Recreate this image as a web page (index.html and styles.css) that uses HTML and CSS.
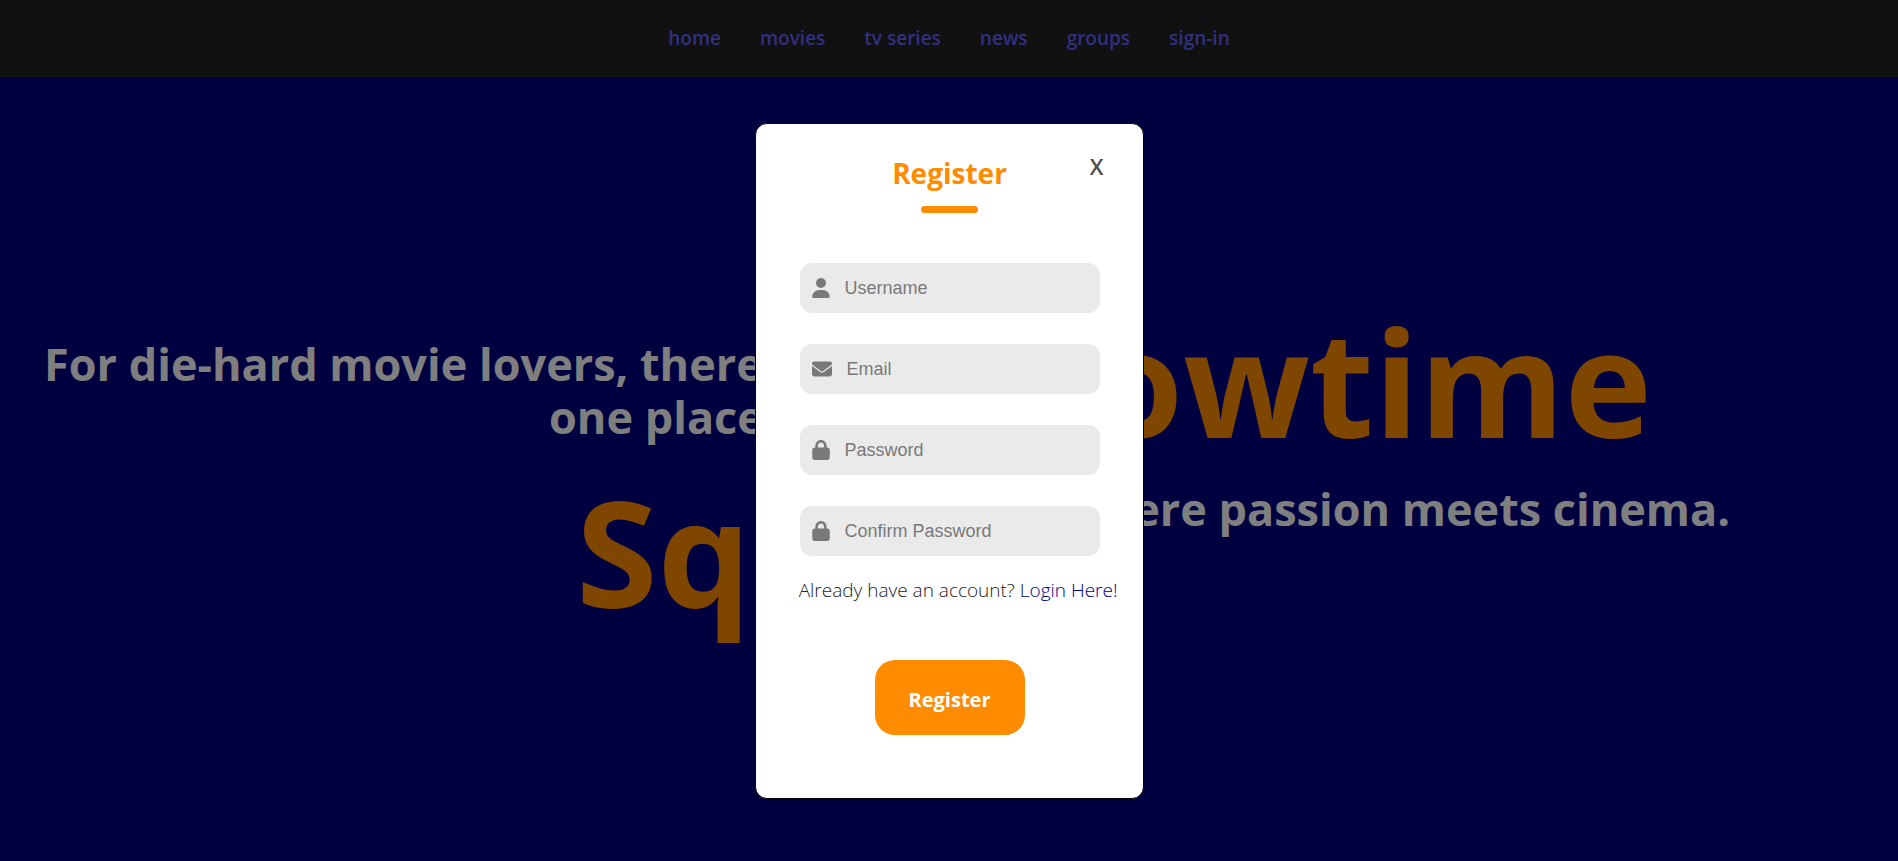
FILE: index.html
```html
<!DOCTYPE html>
<html lang="en">
<head>
<meta charset="utf-8">
<title>Showtime Squad</title>
<link rel="stylesheet" href="styles.css">
</head>
<body>
<header class="topbar">
  <nav class="nav">
    <a href="#">home</a>
    <a href="#">movies</a>
    <a href="#">tv series</a>
    <a href="#">news</a>
    <a href="#">groups</a>
    <a href="#">sign-in</a>
  </nav>
</header>
<main class="hero">
  <section class="hero-left">
    <p class="lead">For die-hard movie lovers, there</p>
    <p class="lead lead-second">one place</p>
    <p class="brand brand-second">Squad</p>
  </section>
  <section class="hero-right">
    <p class="brand">Showtime</p>
    <p class="lead tagline">where passion meets cinema.</p>
  </section>
</main>
<div class="backdrop">
  <form class="modal" role="dialog" aria-labelledby="title">
    <div class="modal-head">
      <h1 class="title" id="title">Register</h1>
      <button class="close" type="button">X</button>
    </div>
    <div class="fields">
      <label class="field">
        <svg class="icon icon-narrow" viewBox="0 0 448 512"><path d="M224 256A128 128 0 1 0 224 0a128 128 0 1 0 0 256zm-45.700 48C79.800 304 0 383.800 0 482.300 0 498.700 13.300 512 29.700 512h388.600c16.400 0 29.700-13.300 29.700-29.700C448 383.800 368.200 304 269.700 304h-91.400z"/></svg>
        <input type="text" placeholder="Username" aria-label="Username">
      </label>
      <label class="field">
        <svg class="icon icon-wide" viewBox="0 0 512 512"><path d="M48 64C21.500 64 0 85.500 0 112c0 15.100 7.100 29.300 19.200 38.400l217.600 163.200c11.400 8.500 27 8.500 38.400 0l217.600-163.200c12.100-9.100 19.200-23.300 19.200-38.400 0-26.500-21.500-48-48-48H48zM0 176v208c0 35.300 28.700 64 64 64h384c35.300 0 64-28.700 64-64V176L294.400 339.200c-22.800 17.100-54 17.100-76.800 0L0 176z"/></svg>
        <input type="email" placeholder="Email" aria-label="Email">
      </label>
      <label class="field">
        <svg class="icon icon-narrow" viewBox="0 0 448 512"><path d="M144 144v48h160v-48c0-44.200-35.800-80-80-80s-80 35.800-80 80zm-64 48v-48C80 64.500 144.500 0 224 0s144 64.500 144 144v48h16c35.300 0 64 28.700 64 64v192c0 35.300-28.700 64-64 64H64c-35.300 0-64-28.700-64-64V256c0-35.300 28.700-64 64-64h16z"/></svg>
        <input type="password" placeholder="Password" aria-label="Password">
      </label>
      <label class="field">
        <svg class="icon icon-narrow" viewBox="0 0 448 512"><path d="M144 144v48h160v-48c0-44.200-35.800-80-80-80s-80 35.800-80 80zm-64 48v-48C80 64.500 144.500 0 224 0s144 64.500 144 144v48h16c35.300 0 64 28.700 64 64v192c0 35.300-28.700 64-64 64H64c-35.300 0-64-28.700-64-64V256c0-35.300 28.700-64 64-64h16z"/></svg>
        <input type="password" placeholder="Confirm Password" aria-label="Confirm Password">
      </label>
    </div>
    <p class="login">Already have an account? <a href="#">Login Here!</a></p>
    <button class="submit" type="submit">Register</button>
  </form>
</div>
</body>
</html>
```
FILE: styles.css
```css
* { box-sizing: border-box; }
body {
  margin: 0;
  min-height: 100vh;
  background: #000080;
  font-family: "Segoe UI", "Open Sans", "Noto Sans", sans-serif;
}
p, h1 { margin: 0; }
a { text-decoration: none; }

.topbar {
  display: flex;
  justify-content: center;
  background: #222;
}
.nav {
  display: flex;
  gap: 39px;
  padding: 24px;
  font-size: 19px;
  line-height: 29px;
  font-weight: 600;
}
.nav a { color: #6060ff; }

.hero {
  display: grid;
  grid-template-columns: minmax(0, 1fr) minmax(0, 1fr);
  white-space: nowrap;
}
.hero-left { padding: 260px 0 0 44px; }
.hero-right {
  padding: 220px 168px 0 0;
  display: flex;
  flex-direction: column;
  align-items: flex-end;
}
.lead {
  color: #fff;
  font-size: 45px;
  line-height: 53px;
  font-weight: 700;
}
.lead-second { margin-left: 505px; }
.brand {
  color: #ff8c00;
  font-size: 148px;
  line-height: 168px;
  font-weight: 700;
}
.brand-second { margin: 24px 0 0 532px; }
.hero-right .brand { margin-right: 78px; }
.tagline { margin-top: 17px; }

.backdrop {
  position: fixed;
  inset: 0;
  display: flex;
  align-items: center;
  justify-content: center;
  padding-top: 60px;
  background: rgba(0, 0, 0, 0.5);
}
.modal {
  display: flex;
  flex-direction: column;
  align-items: center;
  width: 389px;
  padding: 28px 25px 63px 26px;
  border: 1px solid #000;
  border-radius: 12px;
  background: #fff;
}
.modal-head {
  display: grid;
  grid-template-columns: 1fr auto 1fr;
  width: 100%;
}
.title {
  grid-column: 2;
  color: #ff8c00;
  font-size: 28px;
  line-height: 42px;
  font-weight: 700;
}
.title::after {
  content: "";
  display: block;
  width: 57px;
  height: 7px;
  margin: 12px auto 0;
  border-radius: 4px;
  background: #ff8c00;
}
.close {
  justify-self: end;
  align-self: start;
  padding: 0 14px;
  border: 0;
  background: none;
  color: #505050;
  font: 600 22px/28px "Segoe UI", "Open Sans", "Noto Sans", sans-serif;
}
.fields {
  display: flex;
  flex-direction: column;
  gap: 31px;
  width: 300px;
  margin-top: 50px;
}
.field {
  display: flex;
  align-items: center;
  gap: 15px;
  height: 50px;
  padding: 0 12px;
  border-radius: 12px;
  background: #eaeaea;
}
.icon {
  flex: none;
  height: 20px;
  fill: #797979;
}
.icon-narrow { width: 18px; }
.icon-wide { width: 20px; }
.field input {
  flex: 1;
  min-width: 0;
  padding: 2px 0 0;
  border: 0;
  outline: 0;
  background: none;
  color: #444;
  font: 18px "Liberation Sans", Arial, sans-serif;
}
.field input::placeholder { color: #797979; }
.login {
  align-self: flex-end;
  margin-top: 20px;
  color: #222;
  font-size: 19px;
  line-height: 28px;
  font-weight: 300;
  white-space: nowrap;
}
.login a { color: #000080; }
.submit {
  width: 150px;
  height: 75px;
  margin-top: 56px;
  padding: 4px 0 0;
  border: 0;
  border-radius: 20px;
  background: #ff8c00;
  color: #fff;
  font: 700 20px "Segoe UI", "Open Sans", "Noto Sans", sans-serif;
}
```
